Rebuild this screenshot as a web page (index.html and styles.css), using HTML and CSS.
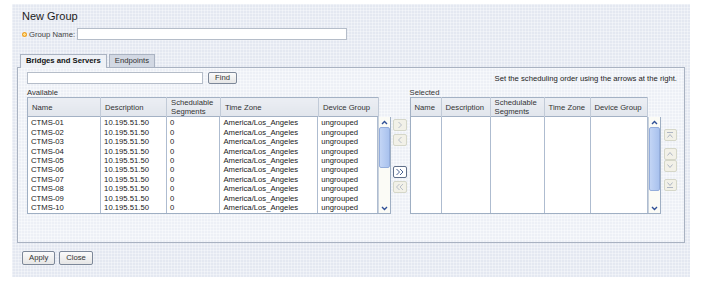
FILE: index.html
```html
<!DOCTYPE html>
<html lang="en">
<head>
    <meta charset="UTF-8">
    <title>New Group</title>
    <link rel="stylesheet" href="styles.css">
</head>
<body>
    <div class="page">
        <h1 class="title">New Group</h1>

        <!-- Group name -->
        <div class="name-row">
            <span class="req"></span>
            <label class="name-label" for="group-name">Group Name:</label>
            <input class="name-input" id="group-name" type="text">
        </div>

        <!-- Tabs -->
        <div class="tabs">
            <div class="tab active">Bridges and Servers</div>
            <div class="tab">Endpoints</div>
        </div>

        <div class="tab-panel">
            <div class="search-row">
                <input class="search-input" type="text">
                <button class="btn">Find</button>
                <span class="hint">Set the scheduling order using the arrows at the right.</span>
            </div>

            <div class="lists">
                <!-- Available -->
                <div class="list list-available">
                    <div class="list-label">Available</div>
                    <table class="grid-head">
                        <colgroup><col style="width:73px"><col style="width:66px"><col style="width:54px"><col style="width:98px"><col style="width:60px"></colgroup>
                        <tr><th>Name</th><th>Description</th><th>Schedulable<br>Segments</th><th>Time Zone</th><th>Device Group</th></tr>
                    </table>
                    <div class="grid-body">
                        <table class="grid-rows">
                            <colgroup><col style="width:73px"><col style="width:66px"><col style="width:54px"><col style="width:98px"><col style="width:60px"></colgroup>
                            <tr><td>CTMS-01</td><td>10.195.51.50</td><td>0</td><td>America/Los_Angeles</td><td>ungrouped</td></tr>
                            <tr><td>CTMS-02</td><td>10.195.51.50</td><td>0</td><td>America/Los_Angeles</td><td>ungrouped</td></tr>
                            <tr><td>CTMS-03</td><td>10.195.51.50</td><td>0</td><td>America/Los_Angeles</td><td>ungrouped</td></tr>
                            <tr><td>CTMS-04</td><td>10.195.51.50</td><td>0</td><td>America/Los_Angeles</td><td>ungrouped</td></tr>
                            <tr><td>CTMS-05</td><td>10.195.51.50</td><td>0</td><td>America/Los_Angeles</td><td>ungrouped</td></tr>
                            <tr><td>CTMS-06</td><td>10.195.51.50</td><td>0</td><td>America/Los_Angeles</td><td>ungrouped</td></tr>
                            <tr><td>CTMS-07</td><td>10.195.51.50</td><td>0</td><td>America/Los_Angeles</td><td>ungrouped</td></tr>
                            <tr><td>CTMS-08</td><td>10.195.51.50</td><td>0</td><td>America/Los_Angeles</td><td>ungrouped</td></tr>
                            <tr><td>CTMS-09</td><td>10.195.51.50</td><td>0</td><td>America/Los_Angeles</td><td>ungrouped</td></tr>
                            <tr><td>CTMS-10</td><td>10.195.51.50</td><td>0</td><td>America/Los_Angeles</td><td>ungrouped</td></tr>
                        </table>
                        <div class="scrollbar">
                            <span class="sb-arrow">
                                <svg width="7" height="5" viewBox="0 0 7 5"><polyline points="1,4 3.5,1.5 6,4" fill="none" stroke="#2f4f96" stroke-width="1.4"/></svg>
                            </span>
                            <span class="sb-thumb thumb-short"></span>
                            <span class="sb-arrow sb-down">
                                <svg width="7" height="5" viewBox="0 0 7 5"><polyline points="1,1 3.5,3.5 6,1" fill="none" stroke="#2f4f96" stroke-width="1.4"/></svg>
                            </span>
                        </div>
                    </div>
                </div>

                <!-- Move buttons -->
                <div class="move-buttons">
                    <span class="mv-btn">
                        <svg width="6" height="8" viewBox="0 0 6 8"><polyline points="1.5,1 4.5,4 1.5,7" fill="none" stroke="#b9bfc9" stroke-width="1"/></svg>
                    </span>
                    <span class="mv-btn mv-gap-sm">
                        <svg width="6" height="8" viewBox="0 0 6 8"><polyline points="4.5,1 1.5,4 4.5,7" fill="none" stroke="#b9bfc9" stroke-width="1"/></svg>
                    </span>
                    <span class="mv-btn on mv-gap-lg">
                        <svg width="10" height="8" viewBox="0 0 10 8"><polyline points="1.5,1 4.5,4 1.5,7" fill="none" stroke="#4d6594" stroke-width="1"/><polyline points="5,1 8,4 5,7" fill="none" stroke="#4d6594" stroke-width="1"/></svg>
                    </span>
                    <span class="mv-btn mv-gap-sm">
                        <svg width="10" height="8" viewBox="0 0 10 8"><polyline points="4.5,1 1.5,4 4.5,7" fill="none" stroke="#b9bfc9" stroke-width="1"/><polyline points="8,1 5,4 8,7" fill="none" stroke="#b9bfc9" stroke-width="1"/></svg>
                    </span>
                </div>

                <!-- Selected -->
                <div class="list list-selected">
                    <div class="list-label">Selected</div>
                    <table class="grid-head">
                        <colgroup><col style="width:31px"><col style="width:49px"><col style="width:54px"><col style="width:46px"><col style="width:57px"></colgroup>
                        <tr><th>Name</th><th>Description</th><th>Schedulable<br>Segments</th><th>Time Zone</th><th>Device Group</th></tr>
                    </table>
                    <div class="grid-body">
                        <table class="grid-rows empty">
                            <colgroup><col style="width:31px"><col style="width:49px"><col style="width:54px"><col style="width:46px"><col style="width:57px"></colgroup>
                            <tr><td></td><td></td><td></td><td></td><td></td></tr>
                        </table>
                        <div class="scrollbar">
                            <span class="sb-arrow">
                                <svg width="7" height="5" viewBox="0 0 7 5"><polyline points="1,4 3.5,1.5 6,4" fill="none" stroke="#2f4f96" stroke-width="1.4"/></svg>
                            </span>
                            <span class="sb-thumb thumb-long"></span>
                            <span class="sb-arrow sb-down">
                                <svg width="7" height="5" viewBox="0 0 7 5"><polyline points="1,1 3.5,3.5 6,1" fill="none" stroke="#2f4f96" stroke-width="1.4"/></svg>
                            </span>
                        </div>
                    </div>
                </div>

                <!-- Order buttons -->
                <div class="order-buttons">
                    <span class="mv-btn">
                        <svg width="8" height="8" viewBox="0 0 8 8"><line x1="1" y1="1.5" x2="7" y2="1.5" stroke="#aeb6c4" stroke-width="1"/><polyline points="1.5,6.5 4,3.5 6.5,6.5" fill="none" stroke="#aeb6c4" stroke-width="1"/></svg>
                    </span>
                    <span class="mv-btn ord-up">
                        <svg width="8" height="8" viewBox="0 0 8 8"><polyline points="1.5,5.5 4,2.5 6.5,5.5" fill="none" stroke="#aeb6c4" stroke-width="1"/></svg>
                    </span>
                    <span class="mv-btn">
                        <svg width="8" height="8" viewBox="0 0 8 8"><polyline points="1.5,2.5 4,5.5 6.5,2.5" fill="none" stroke="#aeb6c4" stroke-width="1"/></svg>
                    </span>
                    <span class="mv-btn ord-bottom">
                        <svg width="8" height="8" viewBox="0 0 8 8"><polyline points="1.5,1.5 4,4.5 6.5,1.5" fill="none" stroke="#aeb6c4" stroke-width="1"/><line x1="1" y1="6.5" x2="7" y2="6.5" stroke="#aeb6c4" stroke-width="1"/></svg>
                    </span>
                </div>
            </div>
        </div>

        <!-- Footer -->
        <div class="actions">
            <button class="btn">Apply</button>
            <button class="btn">Close</button>
        </div>
    </div>
</body>
</html>
```

FILE: styles.css
```css
/* Reset and base styles */
* {
    margin: 0;
    padding: 0;
    box-sizing: border-box;
}

body {
    background-color: #ffffff;
    font-family: "Liberation Sans", Arial, sans-serif;
    font-size: 7.7px;
    color: #222222;
}

/* Outer panel with graph paper texture */
.page {
    margin: 4px 12px 0;
    height: 273px;
    padding: 6px 5px 0;
    background-color: #e4e8f1;
    background-image:
        linear-gradient(rgba(255, 255, 255, 0.35) 1px, transparent 1px),
        linear-gradient(90deg, rgba(255, 255, 255, 0.35) 1px, transparent 1px);
    background-size: 3px 3px;
}

.title {
    margin-left: 5px;
    font-size: 11px;
    line-height: 13px;
    font-weight: normal;
    color: #1c1c1c;
}

/* Group name row */
.name-row {
    display: flex;
    align-items: center;
    height: 12px;
    margin: 5px 0 0 5px;
}

.req {
    width: 5px;
    height: 5px;
    border-radius: 50%;
    background: radial-gradient(circle, #ffe08a 0 1px, #f0a22a 1.5px);
    margin-right: 2px;
}

.name-label {
    color: #444444;
    margin-right: 2px;
}

.name-input {
    width: 270px;
    height: 12px;
    border: 1px solid #b5bdc9;
    background: #ffffff;
}

/* Tabs */
.tabs {
    display: flex;
    gap: 2px;
    margin: 14px 0 0 3px;
    height: 13px;
    position: relative;
    z-index: 1;
}

.tab {
    height: 13px;
    line-height: 12px;
    padding: 0 5px;
    border: 1px solid #aab3c2;
    border-bottom: none;
    background: #d2d8e3;
    color: #333333;
}

.tab.active {
    height: 14px;
    font-weight: bold;
    color: #111111;
    background: #eef1f6;
}

.tab-panel {
    height: 176px;
    padding: 4px 7px 0 9px;
    border: 1px solid #a9b2c1;
    background-color: #edf0f6;
    background-image:
        linear-gradient(rgba(255, 255, 255, 0.4) 1px, transparent 1px),
        linear-gradient(90deg, rgba(255, 255, 255, 0.4) 1px, transparent 1px);
    background-size: 3px 3px;
}

/* Search row */
.search-row {
    display: flex;
    align-items: center;
    height: 12px;
}

.search-input {
    width: 176px;
    height: 12px;
    border: 1px solid #b5bdc9;
    background: #ffffff;
}

.btn {
    height: 12px;
    padding: 0 6px;
    margin-left: 5px;
    border: 1px solid #7d8899;
    border-radius: 2px;
    background: linear-gradient(#fbfbfb, #e6e6e6);
    font-family: inherit;
    font-size: 7.7px;
    line-height: 10px;
    color: #333333;
}

.hint {
    margin-left: auto;
    color: #222222;
}

/* Lists */
.lists {
    display: flex;
    margin-top: 4px;
}

.list-label {
    height: 9px;
    line-height: 9px;
    color: #333333;
}

.grid-head {
    border-collapse: collapse;
    table-layout: fixed;
    height: 20px;
    background: linear-gradient(#eceff4, #e1e5ec);
    border: 1px solid #a3b1c4;
}

.grid-head th {
    font-weight: normal;
    text-align: left;
    padding-left: 4px;
    line-height: 9px;
    color: #333333;
    border-right: 1px solid #c2cbd8;
}

.grid-body {
    display: flex;
    height: 97px;
    border: 1px solid #9fafc3;
    border-top: none;
    background: #ffffff;
}

.grid-rows {
    border-collapse: collapse;
    table-layout: fixed;
    align-self: stretch;
}

.grid-rows td {
    height: 9.4px;
    line-height: 9.4px;
    padding-left: 3px;
    border-right: 1px solid #aebcd0;
    white-space: nowrap;
    overflow: hidden;
    color: #1a1a1a;
}

.grid-rows tr:first-child td {
    padding-top: 1px;
}

.grid-rows.empty {
    height: 100%;
}

.grid-rows.empty td {
    height: 96px;
}

/* Scrollbar */
.scrollbar {
    display: flex;
    flex-direction: column;
    width: 12px;
    margin-left: auto;
    background: #fbfbf6;
    border-left: 1px solid #c9d2de;
}

.sb-arrow {
    height: 10px;
    display: flex;
    align-items: center;
    justify-content: center;
}

.sb-down {
    margin-top: auto;
}

.sb-thumb {
    border: 1px solid #94addb;
    border-radius: 2px;
    background: linear-gradient(90deg, #c3d5f5, #a9c2ee);
}

.thumb-short {
    height: 41px;
}

.thumb-long {
    height: 64px;
}

.list-available .grid-body {
    width: 364px;
}

.list-selected .grid-body {
    width: 251px;
}

/* Move and order buttons */
.move-buttons,
.order-buttons {
    display: flex;
    flex-direction: column;
    margin-left: 2px;
    width: 16px;
}

.move-buttons {
    padding-top: 31px;
    margin-right: 3px;
}

.order-buttons {
    padding-top: 41px;
    margin-left: 3px;
}

.mv-btn {
    height: 12px;
    display: flex;
    align-items: center;
    justify-content: center;
    border: 1px solid #d5d7c9;
    border-radius: 2px;
    background: #f2f1e8;
}

.mv-btn.on {
    border-color: #61708a;
    background: #ffffff;
}

.mv-gap-sm {
    margin-top: 3px;
}

.mv-gap-lg {
    margin-top: 20px;
}

.ord-up {
    margin-top: 7px;
}

.ord-bottom {
    margin-top: 7px;
}

/* Footer */
.actions {
    display: flex;
    margin-top: 8px;
}

.actions .btn {
    height: 14px;
    line-height: 12px;
    margin-left: 4px;
}

.actions .btn:first-child {
    margin-left: 5px;
}
```
